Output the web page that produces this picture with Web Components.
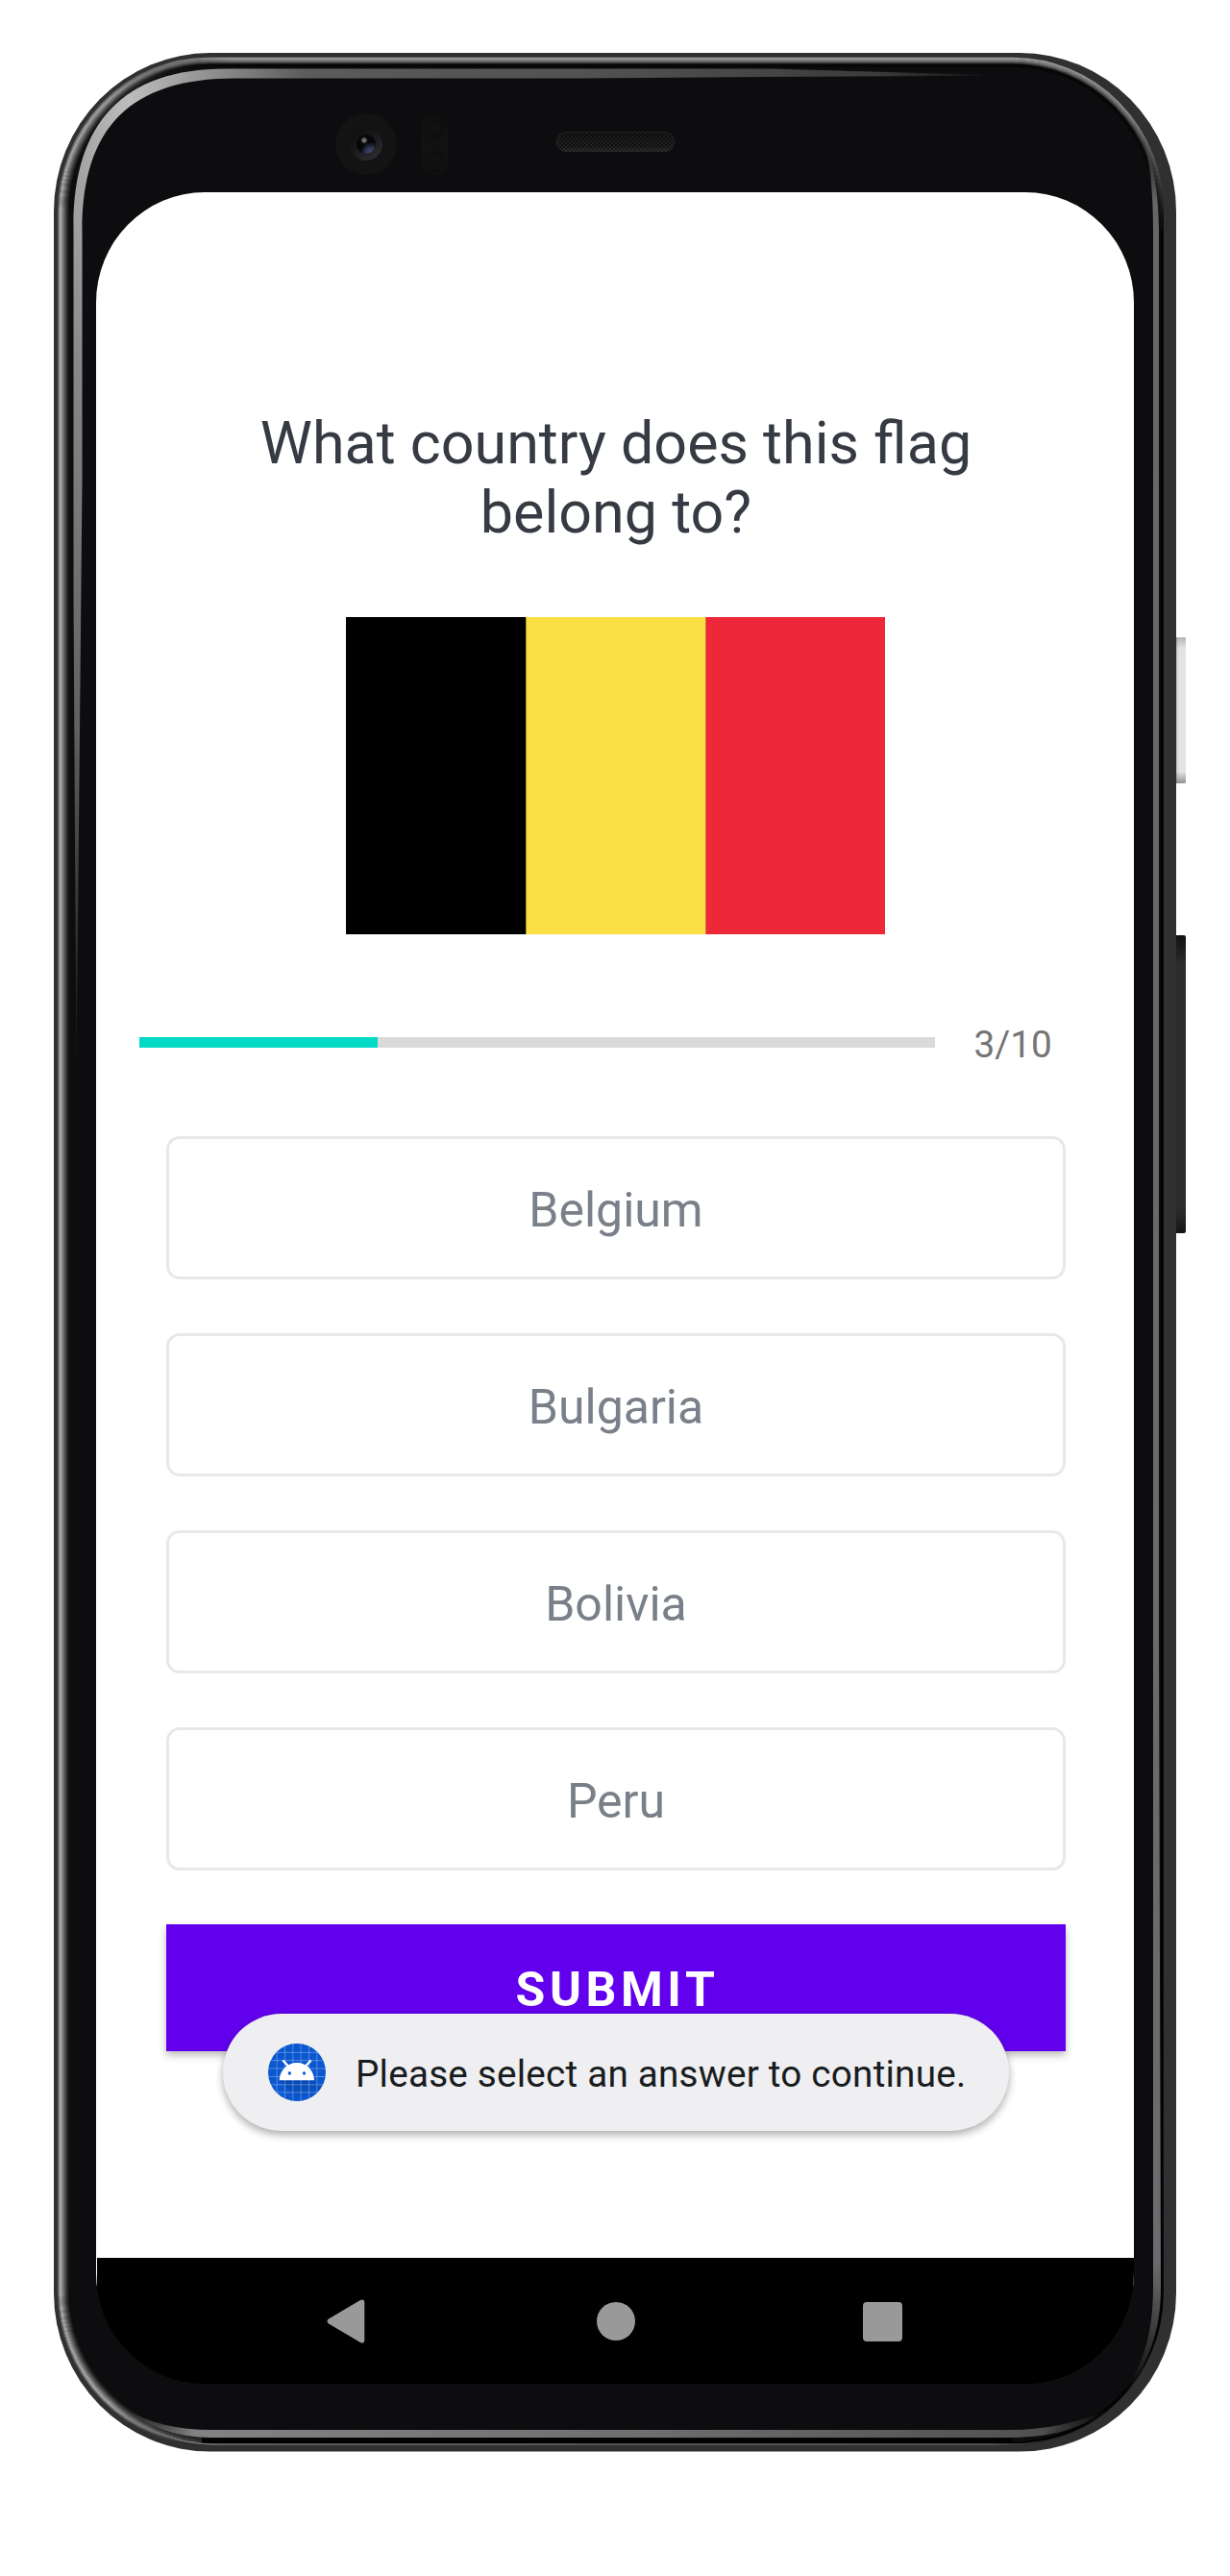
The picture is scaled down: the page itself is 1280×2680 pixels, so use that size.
<!DOCTYPE html>
<html lang="en">
<head>
<meta charset="utf-8">
<title>Flag Quiz</title>
<style>
html,body{margin:0;padding:0;background:#fff}
body{width:1280px;height:2680px;overflow:hidden;font-family:Roboto,"Liberation Sans",sans-serif}
</style>
</head>
<body>
<phone-frame>
  <quiz-screen>
    <quiz-question>What country does this flag belong to?</quiz-question>
    <country-flag></country-flag>
    <quiz-progress value="3" max="10"></quiz-progress>
    <answer-list>
      <answer-option>Belgium</answer-option>
      <answer-option>Bulgaria</answer-option>
      <answer-option>Bolivia</answer-option>
      <answer-option>Peru</answer-option>
    </answer-list>
    <submit-button>SUBMIT</submit-button>
    <toast-message slot="toast">Please select an answer to continue.</toast-message>
    <nav-bar slot="nav"></nav-bar>
  </quiz-screen>
</phone-frame>
<script>
const define = (name, html, setup) => customElements.define(name, class extends HTMLElement {
  connectedCallback() {
    if (this.shadowRoot) return;
    const root = this.attachShadow({ mode: 'open' });
    root.innerHTML = html;
    if (setup) setup(root, this);
  }
});

define('phone-frame', `
<style>
:host{display:block;position:relative;box-sizing:border-box;width:1280px;height:2680px;padding:200px 100px}
svg{position:absolute;left:0;top:0;width:1280px;height:2680px}
.content{position:relative;width:1080px;height:2280px}
</style>
<svg viewBox="0 0 1280 2680" aria-hidden="true">
  <defs>
    <linearGradient id="white" x1="0" x2="1"><stop offset="0" stop-color="#aaa"/><stop offset=".12" stop-color="#d8d8d8"/><stop offset=".4" stop-color="#e4e4e4"/><stop offset="1" stop-color="#e2e2e2"/></linearGradient>
    <linearGradient id="ends" x1="0" y1="0" x2="0" y2="1"><stop offset="0" stop-color="#000" stop-opacity=".2"/><stop offset=".08" stop-color="#000" stop-opacity="0"/><stop offset=".92" stop-color="#000" stop-opacity="0"/><stop offset="1" stop-color="#000" stop-opacity=".35"/></linearGradient>
    <linearGradient id="dark" x1="0" y1="0" x2="0" y2="1"><stop offset="0" stop-color="#111"/><stop offset=".1" stop-color="#2c2c2c"/><stop offset=".92" stop-color="#2b2b2b"/><stop offset="1" stop-color="#151515"/></linearGradient>
    <linearGradient id="fadeX" gradientUnits="userSpaceOnUse" x1="60" y1="0" x2="240" y2="0"><stop offset="0" stop-color="#fff"/><stop offset=".3" stop-color="#fff"/><stop offset="1" stop-color="#000"/></linearGradient>
    <linearGradient id="riseX" gradientUnits="userSpaceOnUse" x1="90" y1="0" x2="240" y2="0"><stop offset="0" stop-color="#000"/><stop offset="1" stop-color="#fff"/></linearGradient>
    <linearGradient id="fallY" gradientUnits="userSpaceOnUse" x1="0" y1="60" x2="0" y2="230"><stop offset="0" stop-color="#000" stop-opacity="0"/><stop offset=".35" stop-color="#000" stop-opacity=".1"/><stop offset="1" stop-color="#000"/></linearGradient>
    <mask id="leftMask" maskUnits="userSpaceOnUse" x="0" y="0" width="1280" height="2680"><rect width="1280" height="2680" fill="url(#fadeX)"/></mask>
    <mask id="topMask" maskUnits="userSpaceOnUse" x="0" y="0" width="1280" height="2680"><rect width="1280" height="260" fill="url(#riseX)"/><rect width="1280" height="260" fill="url(#fallY)"/></mask>
    <linearGradient id="bevelX" gradientUnits="userSpaceOnUse" x1="76" y1="0" x2="1045" y2="0"><stop offset="0" stop-color="#a8a8a8"/><stop offset=".06" stop-color="#c0c0c0"/><stop offset=".13" stop-color="#9a9a9a"/><stop offset=".25" stop-color="#5c5c5c"/><stop offset=".6" stop-color="#505050"/><stop offset=".86" stop-color="#3c3c3c"/><stop offset="1" stop-color="#0d0d0f"/></linearGradient>
    <linearGradient id="bevelY" gradientUnits="userSpaceOnUse" x1="0" y1="60" x2="0" y2="1130"><stop offset="0" stop-color="#fff"/><stop offset=".16" stop-color="#eee"/><stop offset=".3" stop-color="#c8c8c8"/><stop offset=".65" stop-color="#888"/><stop offset="1" stop-color="#000"/></linearGradient>
    <mask id="bevelMask" maskUnits="userSpaceOnUse" x="0" y="0" width="1280" height="2680"><rect width="1280" height="2680" fill="url(#bevelY)"/></mask>
    <linearGradient id="rightBevel" gradientUnits="userSpaceOnUse" x1="0" y1="140" x2="0" y2="2495"><stop offset="0" stop-color="#666" stop-opacity="0"/><stop offset=".03" stop-color="#666"/><stop offset=".94" stop-color="#6c6c6f"/><stop offset=".965" stop-color="#444"/><stop offset="1" stop-color="#333" stop-opacity="0"/></linearGradient>
    <linearGradient id="bottomBevel" gradientUnits="userSpaceOnUse" x1="130" y1="0" x2="1155" y2="0"><stop offset="0" stop-color="#777" stop-opacity="0"/><stop offset=".07" stop-color="#828284"/><stop offset=".5" stop-color="#707072"/><stop offset=".93" stop-color="#505050"/><stop offset="1" stop-color="#333" stop-opacity="0"/></linearGradient>
    <linearGradient id="bottomLine" gradientUnits="userSpaceOnUse" x1="140" y1="0" x2="1130" y2="0"><stop offset="0" stop-color="#999" stop-opacity="0"/><stop offset=".07" stop-color="#777"/><stop offset=".9" stop-color="#666"/><stop offset="1" stop-color="#444" stop-opacity="0"/></linearGradient>
    <filter id="soft" x="0" y="0" width="1280" height="2680" filterUnits="userSpaceOnUse"><feGaussianBlur stdDeviation=".7"/></filter>
    <linearGradient id="lens" x1=".1" y1="0" x2=".8" y2="1"><stop offset="0" stop-color="#0c0c0d"/><stop offset=".5" stop-color="#1a1a1d"/><stop offset="1" stop-color="#303032"/></linearGradient>
    <radialGradient id="pupil" cx=".75" cy=".95" r=".55"><stop offset="0" stop-color="#434b73"/><stop offset=".5" stop-color="#30364f"/><stop offset="1" stop-color="#07070a"/></radialGradient>
    <radialGradient id="glint"><stop offset="0" stop-color="#858585"/><stop offset=".5" stop-color="#606060"/><stop offset="1" stop-color="#222" stop-opacity="0"/></radialGradient>
    <pattern id="mesh" width="4" height="4" patternUnits="userSpaceOnUse"><rect width="4" height="4" fill="#0b0b0c"/><rect width="2" height="2" fill="#252526"/><rect x="2" y="2" width="2" height="2" fill="#252526"/></pattern>
    <linearGradient id="meshShade" x1="0" y1="0" x2="0" y2="1"><stop offset="0" stop-color="#0a0a0a" stop-opacity=".5"/><stop offset=".7" stop-color="#1a1a1a" stop-opacity=".1"/><stop offset="1" stop-color="#303030" stop-opacity=".8"/></linearGradient>
  </defs>
  <rect x="1214" y="663" width="20" height="152" rx="2" fill="#aaa"/>
  <rect x="1224" y="663" width="10" height="152" rx="1.5" fill="url(#white)"/>
  <rect x="1224" y="663" width="10" height="152" rx="1.5" fill="url(#ends)"/>
  <rect x="1214" y="973" width="20" height="310" rx="2" fill="url(#dark)"/>
  <rect x="56" y="55" width="1168" height="2495.6" rx="163" ry="165" fill="#303030"/>
  <rect x="60" y="60" width="1151" height="2484" rx="157" ry="160" fill="#0d0d0f"/>
  <g id="left" mask="url(#leftMask)" fill="none"></g>
  <g id="top" mask="url(#topMask)" fill="none"></g>
  <path d="M1209 240V2390C1209 2468 1141 2541.500 1053 2541.500" fill="none" stroke="#020202" stroke-width="2.500"/>
  <path d="M210 2539.500H1053" fill="none" stroke="#020202" stroke-width="6"/>
  <path d="M140 2519C170 2536 195 2543 225 2543H1053C1090 2543 1115 2532 1130 2524" fill="none" stroke="url(#bottomLine)" stroke-width="1.600"/>
  <path d="M79.500 1130L76.500 620V235C76.500 128 128 71.500 235 71.500H800L1045 78.500L800 80L600 81.500H245C136 81.500 85.500 132 85.500 240V500Z" fill="url(#bevelX)" mask="url(#bevelMask)" filter="url(#soft)"/>
  <path d="M1190 145C1197 170 1200 200 1200 240V2380C1200 2430 1188 2462 1168 2495C1195 2462 1208 2425 1208 2380L1206 1700V240C1206 205 1201 170 1190 145Z" fill="url(#rightBevel)" filter="url(#soft)"/>
  <path d="M130 2506C155 2521 185 2528 220 2528H1050C1090 2528 1125 2520 1155 2506C1125 2528 1090 2536 1050 2536H220C185 2536 155 2525 130 2506Z" fill="url(#bottomBevel)" filter="url(#soft)"/>
  <circle cx="381" cy="150" r="32" fill="#131313"/>
  <circle cx="381" cy="150" r="17" fill="url(#lens)"/>
  <circle cx="381" cy="150" r="10" fill="#07070a"/>
  <circle cx="381" cy="150" r="10" fill="url(#pupil)"/>
  <circle cx="379" cy="146" r="4" fill="url(#glint)"/>
  <rect x="438" y="120" width="28" height="62" rx="14" fill="#111112"/>
  <circle cx="452" cy="133" r="11.500" fill="#0f0f10"/><circle cx="453" cy="132" r="5" fill="#111112"/>
  <circle cx="452" cy="168" r="11.500" fill="#0f0f10"/><circle cx="453" cy="165" r="5" fill="#111112"/>
  <rect x="579" y="137" width="123" height="21" rx="10" fill="url(#mesh)"/>
  <rect x="579.500" y="137.500" width="122" height="20" rx="10" fill="url(#meshShade)" stroke="#242425"/>
</svg>
<div class="content"><slot></slot></div>`, root => {
  const rings = (id, shades) => {
    root.getElementById(id).innerHTML = shades.map((c, i) =>
      `<rect x="${60.5 + i}" y="${60.5 + i}" width="${1150 - 2 * i}" height="${2483 - 2 * i}" rx="${156.5 - i}" ry="${159.5 - i}" stroke="${c}" stroke-width="1.3"/>`).join('');
  };
  rings('left', ['#5c5c5c', '#787878', '#aaa', '#a6a6a6', '#929292', '#7d7d7d', '#6a6a6a', '#575757', '#454545', '#343434', '#242424', '#161617', '#0e0e10']);
  rings('top', ['#a0a0a0', '#8f8f92', '#858588', '#777779', '#616163', '#464648', '#202022', '#060606', '#060606', '#090909']);
});

define('quiz-screen', `
<style>
:host{position:relative;display:flex;flex-direction:column;width:1080px;height:2280px;overflow:hidden;background:linear-gradient(#fff 2178px,#000 2178px);border-radius:113px / 115px}
main{display:flex;flex-direction:column;padding:225px 71px 0 73px}
.nav{margin-top:auto}
</style>
<main><slot></slot></main><slot name="toast"></slot><div class="nav"><slot name="nav"></slot></div>`);

define('quiz-question', `
<style>:host{display:block;width:760px;margin:0 auto;text-align:center;font-size:61px;line-height:72px;color:#363A43}</style>
<slot></slot>`);

define('country-flag', `
<style>:host{display:flex;width:561px;height:330px;margin:73px 0 0 187px}i{flex:1}
.k{background:#000}.y{background:#FAE042;box-shadow:inset 1px 0 #a89a2d}.r{background:#ED2939;box-shadow:inset 1px 0 #d8703b}</style>
<i class="k"></i><i class="y"></i><i class="r"></i>`);

define('quiz-progress', `
<style>
:host{display:flex;align-items:center;height:45px;margin:92px 0 0 -28px;font-size:38.700px;line-height:45px;color:#757575}
.track{width:828px;height:11px;margin-bottom:4px;background:#DADADA}
.fill{height:100%;background:#03DAC6}
span{margin-left:40.500px;white-space:nowrap}
</style>
<div class="track"><div class="fill"></div></div><span></span>`, (root, host) => {
  const v = host.getAttribute('value'), m = host.getAttribute('max');
  root.querySelector('.fill').style.width = v / m * 100 + '%';
  root.querySelector('span').textContent = v + '/' + m;
});

define('answer-list', `
<style>:host{display:flex;flex-direction:column;gap:56px;margin-top:73px}</style><slot></slot>`);

define('answer-option', `
<style>:host{display:flex;align-items:center;justify-content:center;box-sizing:border-box;height:149px;padding-top:5px;border:3px solid #E8E8E8;border-radius:14px;font-size:50px;line-height:58px;color:#7A8089}</style>
<slot></slot>`);

define('submit-button', `
<style>:host{display:flex;align-items:center;justify-content:center;box-sizing:border-box;height:132px;margin-top:56px;padding:3px 0 0 3px;background:#6200EE;box-shadow:0 4px 8px rgba(0,0,0,.28);color:#fff;font-size:50px;font-weight:700;line-height:58px;letter-spacing:4.600px}</style>
<slot></slot>`);

define('toast-message', `
<style>
:host{position:absolute;left:132px;top:1895px;display:flex;align-items:center;box-sizing:border-box;width:818px;height:122px;padding-left:47px;border-radius:61px;background:#EFEFF2;box-shadow:0 4px 9px rgba(0,0,0,.32);font-size:38.700px;letter-spacing:.200px;line-height:45px;color:#191C1E;white-space:nowrap}
svg{flex:none;width:60px;height:60px;margin-right:31px}
span{padding-top:3px}
</style>
<svg viewBox="0 0 180 180" aria-hidden="true">
  <defs><clipPath id="disc"><circle cx="90" cy="90" r="90"/></clipPath><linearGradient id="sh" x1="0" y1="0" x2=".4" y2="1"><stop offset="0" stop-color="#063a94" stop-opacity=".6"/><stop offset="1" stop-color="#063a94" stop-opacity="0"/></linearGradient></defs>
  <g clip-path="url(#disc)">
    <rect width="180" height="180" fill="#0B57D0"/>
    <path d="M35 115H144L180 151V180H100Z" fill="url(#sh)"/>
    <path d="M27.500 0V180M52.500 0V180M77.500 0V180M102.500 0V180M127.500 0V180M152.500 0V180M0 28H180M0 53H180M0 78H180M0 103.500H180M0 128.500H180M0 152.500H180" stroke="#fff" stroke-opacity=".35" stroke-width="2.500" fill="none"/>
  </g>
  <path d="M48 54.500L62 70M132 54.500L118 70" stroke="#fff" stroke-width="7" stroke-linecap="round"/>
  <path d="M35 115C36 84 60 60 90 60C120 60 143 84 144 115Z" fill="#fff"/>
  <circle cx="67" cy="93" r="5" fill="#0B57D0"/><circle cx="112.500" cy="93" r="5" fill="#0B57D0"/>
</svg>
<span><slot></slot></span>`);

define('nav-bar', `
<style>
:host{display:flex;align-items:center;box-sizing:border-box;height:131px;margin-left:1px;padding-top:1px;background:#000}
svg{flex:none;display:block}
.back{margin-left:239px}.home{margin-left:241px}.recent{margin-left:237px}
</style>
<svg class="back" width="40" height="46" viewBox="0 0 40 46"><path d="M35 1.100Q39.300 -.8 39.300 3.500V42.500Q39.300 46.800 35 44.900L2 25.400Q-1 23 2 20.600Z" fill="#999"/></svg>
<svg class="home" width="40" height="40" viewBox="0 0 40 40"><circle cx="20" cy="20" r="20" fill="#999"/></svg>
<svg class="recent" width="41" height="41" viewBox="0 0 41 41"><rect width="41" height="41" rx="4" fill="#999"/></svg>`);
</script>
</body>
</html>
